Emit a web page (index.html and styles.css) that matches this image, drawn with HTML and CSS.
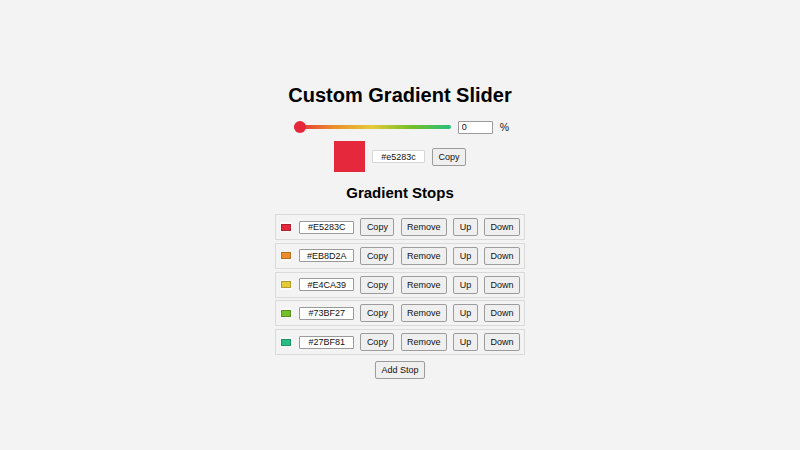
FILE: index.html
```html
<!DOCTYPE html>
<html lang="en">
<head>
<meta charset="utf-8">
<title>Custom Gradient Slider</title>
<link rel="stylesheet" href="styles.css">
</head>
<body>
<main class="app">
  <h1 class="title">Custom Gradient Slider</h1>

  <div class="slider-row">
    <input class="slider" type="range" min="0" max="100" value="0">
    <input class="percent-input" type="number" value="0">
    <span class="percent-sign">%</span>
  </div>

  <div class="preview-row">
    <div class="preview-swatch"></div>
    <input class="hex-input preview-hex" type="text" value="#e5283c">
    <button class="btn">Copy</button>
  </div>

  <h2 class="subtitle">Gradient Stops</h2>

  <ul class="stops">
    <li class="stop">
      <span class="stop-color"><span class="stop-chip" style="background:#E5283C"></span></span>
      <input class="hex-input" type="text" value="#E5283C">
      <button class="btn">Copy</button>
      <button class="btn">Remove</button>
      <button class="btn">Up</button>
      <button class="btn">Down</button>
    </li>
    <li class="stop">
      <span class="stop-color"><span class="stop-chip" style="background:#EB8D2A"></span></span>
      <input class="hex-input" type="text" value="#EB8D2A">
      <button class="btn">Copy</button>
      <button class="btn">Remove</button>
      <button class="btn">Up</button>
      <button class="btn">Down</button>
    </li>
    <li class="stop">
      <span class="stop-color"><span class="stop-chip" style="background:#E4CA39"></span></span>
      <input class="hex-input" type="text" value="#E4CA39">
      <button class="btn">Copy</button>
      <button class="btn">Remove</button>
      <button class="btn">Up</button>
      <button class="btn">Down</button>
    </li>
    <li class="stop">
      <span class="stop-color"><span class="stop-chip" style="background:#73BF27"></span></span>
      <input class="hex-input" type="text" value="#73BF27">
      <button class="btn">Copy</button>
      <button class="btn">Remove</button>
      <button class="btn">Up</button>
      <button class="btn">Down</button>
    </li>
    <li class="stop">
      <span class="stop-color"><span class="stop-chip" style="background:#27BF81"></span></span>
      <input class="hex-input" type="text" value="#27BF81">
      <button class="btn">Copy</button>
      <button class="btn">Remove</button>
      <button class="btn">Up</button>
      <button class="btn">Down</button>
    </li>
  </ul>

  <button class="btn add-btn">Add Stop</button>
</main>
</body>
</html>
```
FILE: styles.css
```css
* {
  box-sizing: border-box;
}

html, body {
  margin: 0;
  height: 100%;
}

body {
  background: #f3f3f3;
  color: #000;
  font-family: "Liberation Sans", Arial, sans-serif;
}

.app {
  display: flex;
  flex-direction: column;
  align-items: center;
  padding-top: 83px;
}

.title {
  margin: 0;
  font-size: 20px;
  line-height: 24px;
  font-weight: bold;
}

/* range slider + percentage */
.slider-row {
  display: flex;
  align-items: center;
  gap: 7px;
  height: 14px;
  margin-top: 13px;
  padding-left: 3px;
}

.slider {
  -webkit-appearance: none;
  appearance: none;
  width: 157px;
  height: 12px;
  margin: 0;
  background: transparent;
}

.slider::-webkit-slider-runnable-track {
  height: 4px;
  border-radius: 2px;
  background: linear-gradient(to right, #e5283c, #eb8d2a 25%, #e4ca39 50%, #73bf27 75%, #27bf81);
}

.slider::-webkit-slider-thumb {
  -webkit-appearance: none;
  appearance: none;
  width: 12px;
  height: 12px;
  margin-top: -4px;
  border-radius: 50%;
  background: #e5283c;
}

.percent-input {
  -moz-appearance: textfield;
  appearance: textfield;
  width: 35px;
  height: 13px;
  padding: 0 3px;
  border: 1px solid #9a9a9a;
  border-radius: 1px;
  background: #fff;
  font: 9px "Liberation Sans", Arial, sans-serif;
  color: #111;
}

.percent-input::-webkit-inner-spin-button,
.percent-input::-webkit-outer-spin-button {
  -webkit-appearance: none;
  margin: 0;
}

.percent-sign {
  font-size: 10.5px;
  color: #222;
}

/* current colour preview */
.preview-row {
  display: flex;
  align-items: center;
  gap: 7px;
  margin-top: 7px;
}

.preview-swatch {
  width: 31px;
  height: 31px;
  background: #e5283c;
}

.hex-input {
  flex-shrink: 0;
  width: 55px;
  height: 13px;
  padding: 0 2px;
  border: 1px solid #9a9a9a;
  border-radius: 1px;
  background: #fff;
  text-align: center;
  font: 9px "Liberation Sans", Arial, sans-serif;
  color: #111;
}

.preview-hex {
  width: 53px;
  border-color: #d6d6d6;
}

.btn {
  flex-shrink: 0;
  height: 18px;
  padding: 0 5.5px;
  border: 1px solid #9c9c9c;
  border-radius: 2px;
  background: #efefef;
  font: 9px "Liberation Sans", Arial, sans-serif;
  color: #111;
}

.subtitle {
  margin: 12px 0 0;
  font-size: 15px;
  line-height: 18px;
  font-weight: bold;
}

/* gradient stop list */
.stops {
  list-style: none;
  margin: 12px 0 0;
  padding: 0;
  width: 250px;
  display: flex;
  flex-direction: column;
  gap: 2.75px;
}

.stop {
  display: flex;
  align-items: center;
  gap: 6.2px;
  height: 26px;
  padding: 0 3px 0 4px;
  border: 1px solid #dadada;
}

.stop-color {
  flex-shrink: 0;
  display: flex;
  width: 12px;
  height: 10px;
  margin-right: 1px;
  padding: 1.5px 1px;
  background: #fbfbfb;
  border-radius: 1px;
}

.stop-chip {
  flex: 1;
  border: 1px solid rgba(0, 0, 0, 0.22);
}

.add-btn {
  margin-top: 6px;
}
```
